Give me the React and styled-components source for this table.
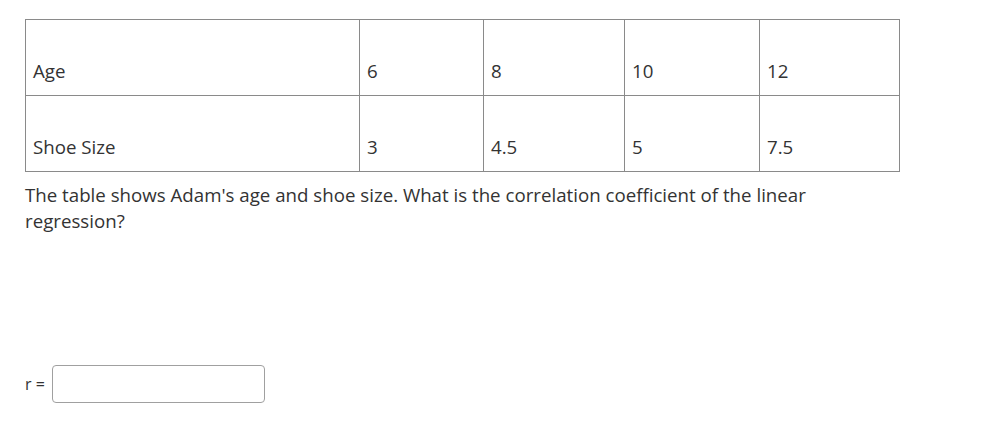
import React from 'react';
import styled, { createGlobalStyle } from 'styled-components';

const Global = createGlobalStyle`
body {
    margin: 0;
    background: #ffffff;
    font-family: "Open Sans", "Liberation Sans", sans-serif;
    color: #333333;
}
`

const Page = styled.div`
padding: 19px 25px 20px 25px;
width: 874px;
`

const DataTable = styled.table`
width: 874px;
border-collapse: collapse;
border: 1px solid #333333;
table-layout: fixed;
`

const Cell = styled.td`
box-sizing: border-box;
width: ${p => p.$w}px;
height: 76px;
padding: 0 7px 11px 7px;
vertical-align: bottom;
border: 1px solid #8a8a8a;
font-size: 18.7px;
line-height: 26px;
color: #333333;
`

const Question = styled.p`
margin: 10px 0 0 0;
font-size: 18.7px;
line-height: 26px;
color: #333333;
width: 820px;
`

const AnswerRow = styled.div`
display: flex;
align-items: center;
gap: 7px;
margin-top: 131px;
`

const Label = styled.span`
font-size: 16px;
color: #333333;
`

const Field = styled.input`
width: 213px;
height: 38px;
box-sizing: border-box;
border: 1px solid #a0a0a0;
border-radius: 4px;
outline: none;
`

const widths = [334, 124, 141, 135, 140]
const rows = [
    ['Age', '6', '8', '10', '12'],
    ['Shoe Size', '3', '4.5', '5', '7.5'],
]

const App = () => {
    return (
        <Page>
            <Global />
            <DataTable>
                <tbody>
                    {rows.map((row, i) => (
                        <tr key={i}>
                            {row.map((cell, j) => (
                                <Cell key={j} $w={widths[j]}>{cell}</Cell>
                            ))}
                        </tr>
                    ))}
                </tbody>
            </DataTable>
            <Question>
                The table shows Adam's age and shoe size. What is the correlation coefficient of the linear regression?
            </Question>
            <AnswerRow>
                <Label>r =</Label>
                <Field type="text" />
            </AnswerRow>
        </Page>
    )
}

export default App
